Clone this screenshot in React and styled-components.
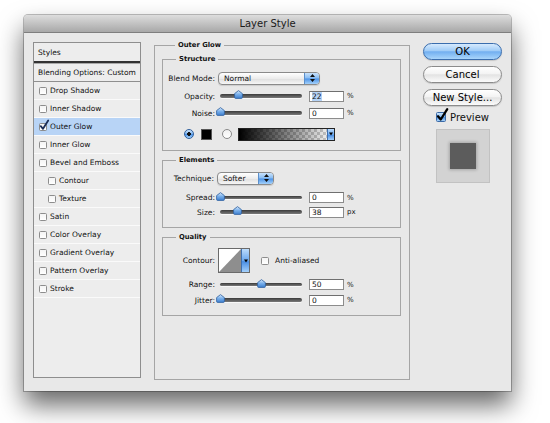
import React from 'react';
import styled, { createGlobalStyle } from 'styled-components';

const Global = createGlobalStyle`
  html, body { margin: 0; padding: 0; background: #fff; }
  body { font-family: "DejaVu Sans", "Noto Sans", sans-serif; color: #111; }
  * { box-sizing: border-box; }
`;

const Page = styled.div`
  width: 550px;
  height: 423px;
  padding: 15px 0 0 24px;
  overflow: hidden;
`;

const Window = styled.div`
  width: 487px;
  height: 376px;
  background: #e8e8e8;
  display: flex;
  flex-direction: column;
  border-radius: 4px 4px 0 0;
  box-shadow: 0 0 0 1px rgba(0, 0, 0, 0.25), 0 14px 26px rgba(0, 0, 0, 0.6);
`;

const TitleBar = styled.div`
  height: 18px;
  flex: none;
  display: flex;
  align-items: center;
  justify-content: center;
  background: linear-gradient(#dddddd, #a8a8a8);
  border-bottom: 1px solid #7e7e7e;
  border-radius: 4px 4px 0 0;
  font-size: 10px;
  color: #1a1a1a;
`;

const Content = styled.div`
  flex: 1;
  display: flex;
  align-items: flex-start;
  gap: 13px;
  padding: 0 9px;
`;

/* ---------- Left styles list ---------- */
const StylesPanel = styled.div`
  margin-top: 9px;
  width: 108px;
  height: 336px;
  border: 1px solid #8e8e8e;
  background: #ededed;
  display: flex;
  flex-direction: column;
  font-size: 7.5px;
`;

const PanelHeader = styled.div`
  height: 20px;
  flex: none;
  display: flex;
  align-items: center;
  padding-left: 4px;
  border-bottom: 2px solid #333;
`;

const BlendRow = styled.div`
  height: 19px;
  flex: none;
  display: flex;
  align-items: center;
  padding-left: 4px;
  border-top: 1px solid #a9a9a9;
  border-bottom: 1px solid #8f8f8f;
`;

const StyleRow = styled.div`
  height: 18px;
  flex: none;
  display: flex;
  align-items: center;
  gap: 3px;
  padding-left: ${p => (p.$indent ? 14 : 5)}px;
  border-bottom: 1px solid #fafafa;
  background: ${p => (p.$active ? '#b8d4f6' : 'transparent')};
`;

const Box = styled.span`
  position: relative;
  flex: none;
  width: ${p => p.$size || 8}px;
  height: ${p => p.$size || 8}px;
  border: 1px solid ${p => (p.$blue ? '#3a6aa8' : '#8d8d8d')};
  border-radius: 1.5px;
  background: ${p =>
    p.$blue
      ? 'linear-gradient(#cbe4fc, #7db5f0 50%, #4d92e4 55%, #a7d2fa)'
      : 'linear-gradient(#f4f4f4, #fff)'};
`;

const CheckMark = styled.svg`
  position: absolute;
  left: 0;
  bottom: 0;
  overflow: visible;
`;

const Checkbox = ({ checked, size, blue, color = '#1a2d57' }) => (
  <Box $size={size} $blue={blue}>
    {checked && (
      <CheckMark width={size || 8} height={size || 8} viewBox="0 0 8 8">
        <path d="M0.8 4.2 L3 6.8 L8.2 -1.5" fill="none" stroke={color} strokeWidth="1.8" strokeLinecap="round" strokeLinejoin="round" />
      </CheckMark>
    )}
  </Box>
);

/* ---------- Group boxes ---------- */
const Group = styled.fieldset`
  margin: ${p => p.$mt || 0}px 0 0 0;
  padding: ${p => p.$pad};
  border: 1px solid #a5a5a5;
  min-width: 0;
  width: ${p => p.$w || '100%'};
  height: ${p => (p.$h ? `${p.$h}px` : 'auto')};
`;

const Legend = styled.legend`
  margin-left: 13px;
  padding: 0 3px;
  font-weight: bold;
  font-size: 6.8px;
  line-height: 9px;
  color: #111;
`;

const Row = styled.div`
  display: flex;
  align-items: center;
  height: ${p => p.$h || 14}px;
  margin-top: ${p => p.$mt || 0}px;
  padding-left: ${p => p.$pl || 0}px;
  font-size: 7.5px;
`;

const Label = styled.span`
  width: ${p => p.$w || 52}px;
  flex: none;
  text-align: right;
  margin-right: 3px;
  white-space: nowrap;
`;

const SelectBox = styled.div`
  width: ${p => p.$w}px;
  height: 13px;
  border: 1px solid #8a8a8a;
  border-radius: 4px;
  background: linear-gradient(#ffffff, #ececec 50%, #dfdfdf 52%, #f6f6f6);
  display: flex;
  align-items: center;
  justify-content: space-between;
  overflow: hidden;
  padding-left: 5px;
  box-shadow: 0 1px 1px rgba(0, 0, 0, 0.12);
`;

const SelectArrows = styled.span`
  width: 15px;
  align-self: stretch;
  display: flex;
  align-items: center;
  justify-content: center;
  background: linear-gradient(#c8e2fc, #86bbf2 48%, #4c92e6 52%, #a3d1fb);
  border-left: 1px solid #5b8fcb;
`;

const Select = ({ w, children }) => (
  <SelectBox $w={w}>
    <span>{children}</span>
    <SelectArrows>
      <svg width="5" height="8" viewBox="0 0 5 8">
        <path d="M2.5 0 L5 3 H0 Z M2.5 8 L5 5 H0 Z" fill="#111" />
      </svg>
    </SelectArrows>
  </SelectBox>
);

const Track = styled.div`
  position: relative;
  width: 82px;
  height: 3.5px;
  margin-left: 2px;
  border-radius: 2px;
  background: linear-gradient(#3a3a3a, #7a7a7a);
  box-shadow: 0 1px 0 rgba(255, 255, 255, 0.7);
`;

const ThumbWrap = styled.span`
  position: absolute;
  top: -4px;
  width: 9px;
  height: 9px;
  display: block;
  line-height: 0;
`;

const Slider = ({ pct }) => (
  <Track>
    <ThumbWrap style={{ left: `calc(${pct}% - 4.5px)` }}>
      <svg width="9" height="9" viewBox="0 0 9 9">
        <defs>
          <linearGradient id="thumbG" x1="0" y1="0" x2="0" y2="1">
            <stop offset="0" stopColor="#d6e9fc" />
            <stop offset="0.5" stopColor="#77aeea" />
            <stop offset="1" stopColor="#3d7fd0" />
          </linearGradient>
        </defs>
        <path d="M4.5 0.6 L8.4 3.6 V7.4 Q8.4 8.4 7.4 8.4 H1.6 Q0.6 8.4 0.6 7.4 V3.6 Z" fill="url(#thumbG)" stroke="#2e5f9e" strokeWidth="0.8" />
      </svg>
    </ThumbWrap>
  </Track>
);

const Input = styled.div`
  width: 35px;
  height: 11px;
  margin-left: 7px;
  background: #fff;
  border: 1px solid #8c8c8c;
  border-top-color: #6f6f6f;
  display: flex;
  align-items: center;
  padding-left: 2px;
  font-size: 7.5px;
`;

const Selected = styled.span`
  background: #b5d3f6;
`;

const Unit = styled.span`
  margin-left: 3px;
  font-size: 7px;
`;

const SliderRow = ({ label, pct, value, unit, mt, selected }) => (
  <Row $mt={mt}>
    <Label>{label}</Label>
    <Slider pct={pct} />
    <Input>{selected ? <Selected>{value}</Selected> : value}</Input>
    <Unit>{unit}</Unit>
  </Row>
);

const Radio = styled.span`
  width: 10px;
  height: 10px;
  flex: none;
  border-radius: 50%;
  margin-right: ${p => p.$mr}px;
  border: 1px solid ${p => (p.$on ? '#2f5f9d' : '#8a8a8a')};
  background: ${p =>
    p.$on
      ? 'radial-gradient(circle, #111 0 1.6px, transparent 2px), linear-gradient(#cfe5fc, #78b1ef 50%, #4a90e4 55%, #a9d4fb)'
      : 'linear-gradient(#f0f0f0, #ffffff)'};
`;

const ColorSwatch = styled.span`
  width: 11px;
  height: 11px;
  flex: none;
  margin-right: 10px;
  background: #000;
  border: 1px solid #555;
`;

const GradientSwatch = styled.span`
  width: 97px;
  height: 13px;
  flex: none;
  display: flex;
  justify-content: flex-end;
  border: 1px solid #222;
  background: linear-gradient(to right, #000, rgba(0, 0, 0, 0)),
    repeating-conic-gradient(#cfcfcf 0 25%, #ffffff 0 50%) 0 0 / 6px 6px;
`;

const MiniDrop = styled.span`
  width: ${p => p.$w}px;
  align-self: stretch;
  display: flex;
  align-items: center;
  justify-content: center;
  background: linear-gradient(#bcdcfc, #6aa7ee 50%, #4a8ee4 55%, #a4d0fb);
  border-left: 1px solid #3f70b0;
`;

const DownTri = () => (
  <svg width="4" height="4" viewBox="0 0 4 4">
    <path d="M0 0.5 H4 L2 3.5 Z" fill="#000" />
  </svg>
);

const ContourSwatch = styled.span`
  width: 32px;
  height: 25px;
  flex: none;
  display: flex;
  border: 1px solid #6a6a6a;
  margin-right: 11px;
  background: #fff;
  overflow: hidden;
`;

const ContourArt = styled.svg`
  flex: 1;
  display: block;
`;

const CheckText = styled.span`
  margin-left: 6px;
`;

/* ---------- Right column ---------- */
const RightCol = styled.div`
  margin-top: 10px;
  width: 79px;
  display: flex;
  flex-direction: column;
  align-items: center;
`;

const Button = styled.div`
  width: 79px;
  height: 17px;
  margin-top: ${p => p.$mt || 0}px;
  border-radius: 9px;
  display: flex;
  align-items: center;
  justify-content: center;
  font-size: 10px;
  color: #000;
  border: 1px solid ${p => (p.$primary ? '#3a6dad' : '#8b8b8b')};
  background: ${p =>
    p.$primary
      ? 'linear-gradient(#d6eafd, #a0ccf7 45%, #72aff0 52%, #a9d5fb)'
      : 'linear-gradient(#ffffff, #f3f3f3 45%, #e3e3e3 52%, #fbfbfb)'};
  box-shadow: 0 1px 1px rgba(0, 0, 0, 0.15);
`;

const PreviewRow = styled.div`
  margin-top: 6px;
  height: 10px;
  display: flex;
  align-items: center;
  gap: 4px;
  font-size: 10px;
`;

const PreviewBox = styled.div`
  width: 54px;
  height: 54px;
  margin-top: 7px;
  background: #d3d3d3;
  border: 1px solid #c2c2c2;
  display: flex;
  align-items: center;
  justify-content: center;
`;

const PreviewSquare = styled.div`
  width: 26px;
  height: 26px;
  background: #5c5c5c;
  box-shadow: 0 0 3px 1px rgba(0, 0, 0, 0.22);
`;

const styleItems = [
  { name: 'Drop Shadow' },
  { name: 'Inner Shadow' },
  { name: 'Outer Glow', active: true, checked: true },
  { name: 'Inner Glow' },
  { name: 'Bevel and Emboss' },
  { name: 'Contour', indent: true },
  { name: 'Texture', indent: true },
  { name: 'Satin' },
  { name: 'Color Overlay' },
  { name: 'Gradient Overlay' },
  { name: 'Pattern Overlay' },
  { name: 'Stroke' },
];

export default function App() {
  return (
    <Page>
      <Global />
      <Window>
        <TitleBar>Layer Style</TitleBar>
        <Content>
          <StylesPanel>
            <PanelHeader>Styles</PanelHeader>
            <BlendRow>Blending Options: Custom</BlendRow>
            {styleItems.map(it => (
              <StyleRow key={it.name} $indent={it.indent} $active={it.active}>
                <Checkbox checked={it.checked} />
                <span>{it.name}</span>
              </StyleRow>
            ))}
          </StylesPanel>

          <Group $mt={7.5} $w="256px" $h={339.5} $pad="5px 8px 0 7px">
            <Legend>Outer Glow</Legend>

            <Group $pad="0 0 9px 0">
              <Legend>Structure</Legend>
              <Row $mt={7.5}>
                <Label>Blend Mode:</Label>
                <Select w={102}>Normal</Select>
              </Row>
              <SliderRow label="Opacity:" pct={22} value="22" unit="%" mt={4} selected />
              <SliderRow label="Noise:" pct={0} value="0" unit="%" mt={3} />
              <Row $mt={7} $pl={21}>
                <Radio $on $mr={7} />
                <ColorSwatch />
                <Radio $mr={6} />
                <GradientSwatch>
                  <MiniDrop $w={7}><DownTri /></MiniDrop>
                </GradientSwatch>
              </Row>
            </Group>

            <Group $mt={4.5} $pad="0 0 8px 0">
              <Legend>Elements</Legend>
              <Row $mt={6.5}>
                <Label $w={51}>Technique:</Label>
                <Select w={57}>Softer</Select>
              </Row>
              <SliderRow label="Spread:" pct={0} value="0" unit="%" mt={5.5} />
              <SliderRow label="Size:" pct={21} value="38" unit="px" mt={0.5} />
            </Group>

            <Group $mt={4.5} $pad="0 0 8px 0">
              <Legend>Quality</Legend>
              <Row $mt={6.5} $h={25}>
                <Label $w={52}>Contour:</Label>
                <ContourSwatch>
                  <ContourArt viewBox="0 0 23 23" preserveAspectRatio="none">
                    <polygon points="0,23 23,0 23,23" fill="#8e8e8e" />
                  </ContourArt>
                  <MiniDrop $w={8}><DownTri /></MiniDrop>
                </ContourSwatch>
                <Checkbox />
                <CheckText>Anti-aliased</CheckText>
              </Row>
              <SliderRow label="Range:" pct={50} value="50" unit="%" mt={4.5} />
              <SliderRow label="Jitter:" pct={0} value="0" unit="%" mt={1.5} />
            </Group>
          </Group>

          <RightCol>
            <Button $primary>OK</Button>
            <Button $mt={6}>Cancel</Button>
            <Button $mt={6}>New Style...</Button>
            <PreviewRow>
              <Checkbox checked size={10} blue color="#000" />
              <span>Preview</span>
            </PreviewRow>
            <PreviewBox>
              <PreviewSquare />
            </PreviewBox>
          </RightCol>
        </Content>
      </Window>
    </Page>
  );
}
